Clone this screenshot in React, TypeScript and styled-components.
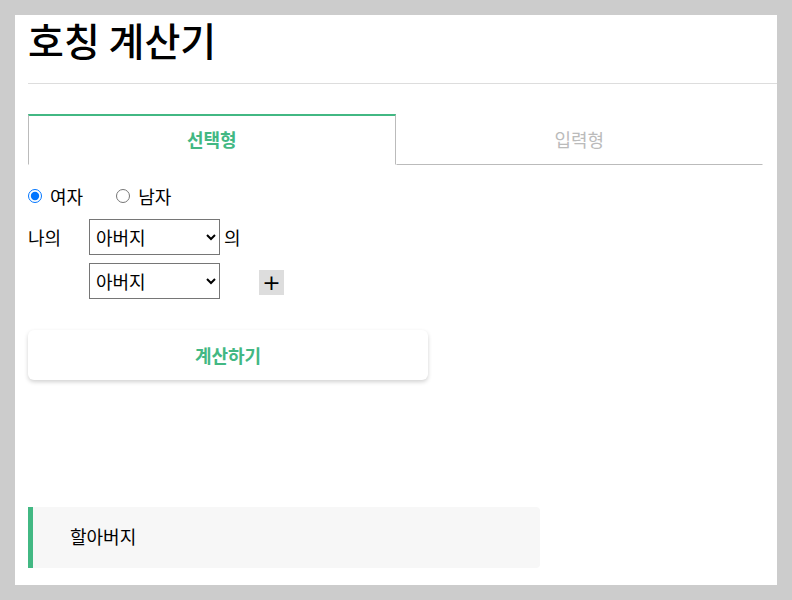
import React, { useState } from "react";
import styled, { createGlobalStyle } from "styled-components";

const GREEN = "#42b883";

const Global = createGlobalStyle`
  html, body { margin: 0; padding: 0; background: #cccccc; }
  body {
    font-family: "Noto Sans CJK KR", "Noto Sans", sans-serif;
    color: #000;
  }
  * { box-sizing: border-box; }
`;

const Panel = styled.div`
  margin: 15px;
  width: 762px;
  height: 570px;
  background: #ffffff;
  display: flex;
  flex-direction: column;
`;

const Header = styled.header`
  margin-left: 13px;
  height: 69px;
  border-bottom: 1px solid #dddddd;
  display: flex;
  align-items: flex-start;
`;

const Title = styled.h1`
  margin: 0;
  font-size: 39px;
  font-weight: 500;
  line-height: 49px;
  letter-spacing: 0;
`;

const Body = styled.main`
  padding: 30px 14px 0 13px;
  display: flex;
  flex-direction: column;
`;

const Tabs = styled.div`
  display: flex;
  height: 51px;
`;

const Tab = styled.button<{ $active?: boolean }>`
  flex: 1;
  height: 51px;
  margin: 0;
  padding: 0 0 2px;
  background: #fff;
  font-family: inherit;
  font-size: 18px;
  cursor: pointer;
  border: none;
  border-top: 2px solid ${(p) => (p.$active ? GREEN : "transparent")};
  border-left: 1px solid ${(p) => (p.$active ? "#bbbbbb" : "transparent")};
  border-right: 1px solid ${(p) => (p.$active ? "#bbbbbb" : "transparent")};
  border-bottom: 1px solid ${(p) => (p.$active ? "transparent" : "#bbbbbb")};
  color: ${(p) => (p.$active ? GREEN : "#bbbbbb")};
  font-weight: ${(p) => (p.$active ? 700 : 400)};
`;

const RadioRow = styled.div`
  display: flex;
  align-items: center;
  height: 24px;
  margin-top: 19px;
  font-size: 18px;
`;

const RadioLabel = styled.label`
  display: flex;
  align-items: center;
  gap: 8px;
  margin-right: 33px;
  input {
    margin: 0;
    width: 14px;
    height: 14px;
  }
`;

const Row = styled.div`
  display: flex;
  align-items: center;
  height: 36px;
  font-size: 18px;
  margin-top: 8px;
`;

const FirstRow = styled(Row)`
  margin-top: 11px;
`;

const RowLabel = styled.span`
  width: 61px;
`;

const Select = styled.select`
  width: 131px;
  height: 36px;
  font-family: inherit;
  font-size: 18px;
  padding: 0 2px;
  border: 1px solid #767676;
  border-radius: 0;
  background: #fff;
  color: #000;
`;

const Suffix = styled.span`
  margin-left: 4px;
`;

const PlusButton = styled.button`
  margin-left: 39px;
  margin-top: 3px;
  width: 25px;
  height: 25px;
  padding: 0;
  border: none;
  background: #dddddd;
  font-family: "DejaVu Sans", sans-serif;
  font-size: 22px;
  line-height: 25px;
  color: #000;
  cursor: pointer;
`;

const CalcButton = styled.button`
  margin-top: 31px;
  width: 400px;
  height: 50px;
  border: none;
  border-radius: 6px;
  background: #fff;
  box-shadow: 0 2px 4px rgba(0, 0, 0, 0.18);
  color: ${GREEN};
  font-family: inherit;
  font-size: 18px;
  font-weight: 700;
  padding-bottom: 2px;
  cursor: pointer;
`;

const Spacer = styled.div`
  height: 92px;
  margin: 20px 0 0 -13px;
  width: 427px;
  background: #ffffff;
`;

const Result = styled.div`
  margin-top: 15px;
  width: 512px;
  height: 61px;
  background: #f7f7f7;
  border-left: 5px solid ${GREEN};
  border-radius: 0 4px 4px 0;
  padding: 0 0 3px 37px;
  display: flex;
  align-items: center;
  font-size: 18px;
`;

const options = ["아버지", "어머니", "형제", "자매", "아들", "딸", "남편", "아내"];

export default function App() {
  const [tab, setTab] = useState(0);
  const [gender, setGender] = useState("f");
  return (
    <>
      <Global />
      <Panel>
        <Header>
          <Title>호칭 계산기</Title>
        </Header>
        <Body>
          <Tabs>
            <Tab $active={tab === 0} onClick={() => setTab(0)}>선택형</Tab>
            <Tab $active={tab === 1} onClick={() => setTab(1)}>입력형</Tab>
          </Tabs>
          <RadioRow>
            <RadioLabel>
              <input type="radio" name="g" checked={gender === "f"} onChange={() => setGender("f")} />
              여자
            </RadioLabel>
            <RadioLabel>
              <input type="radio" name="g" checked={gender === "m"} onChange={() => setGender("m")} />
              남자
            </RadioLabel>
          </RadioRow>
          <FirstRow>
            <RowLabel>나의</RowLabel>
            <Select defaultValue="아버지">
              {options.map((o) => (
                <option key={o}>{o}</option>
              ))}
            </Select>
            <Suffix>의</Suffix>
          </FirstRow>
          <Row>
            <RowLabel />
            <Select defaultValue="아버지">
              {options.map((o) => (
                <option key={o}>{o}</option>
              ))}
            </Select>
            <PlusButton>+</PlusButton>
          </Row>
          <CalcButton>계산하기</CalcButton>
          <Spacer />
          <Result>할아버지</Result>
        </Body>
      </Panel>
    </>
  );
}
